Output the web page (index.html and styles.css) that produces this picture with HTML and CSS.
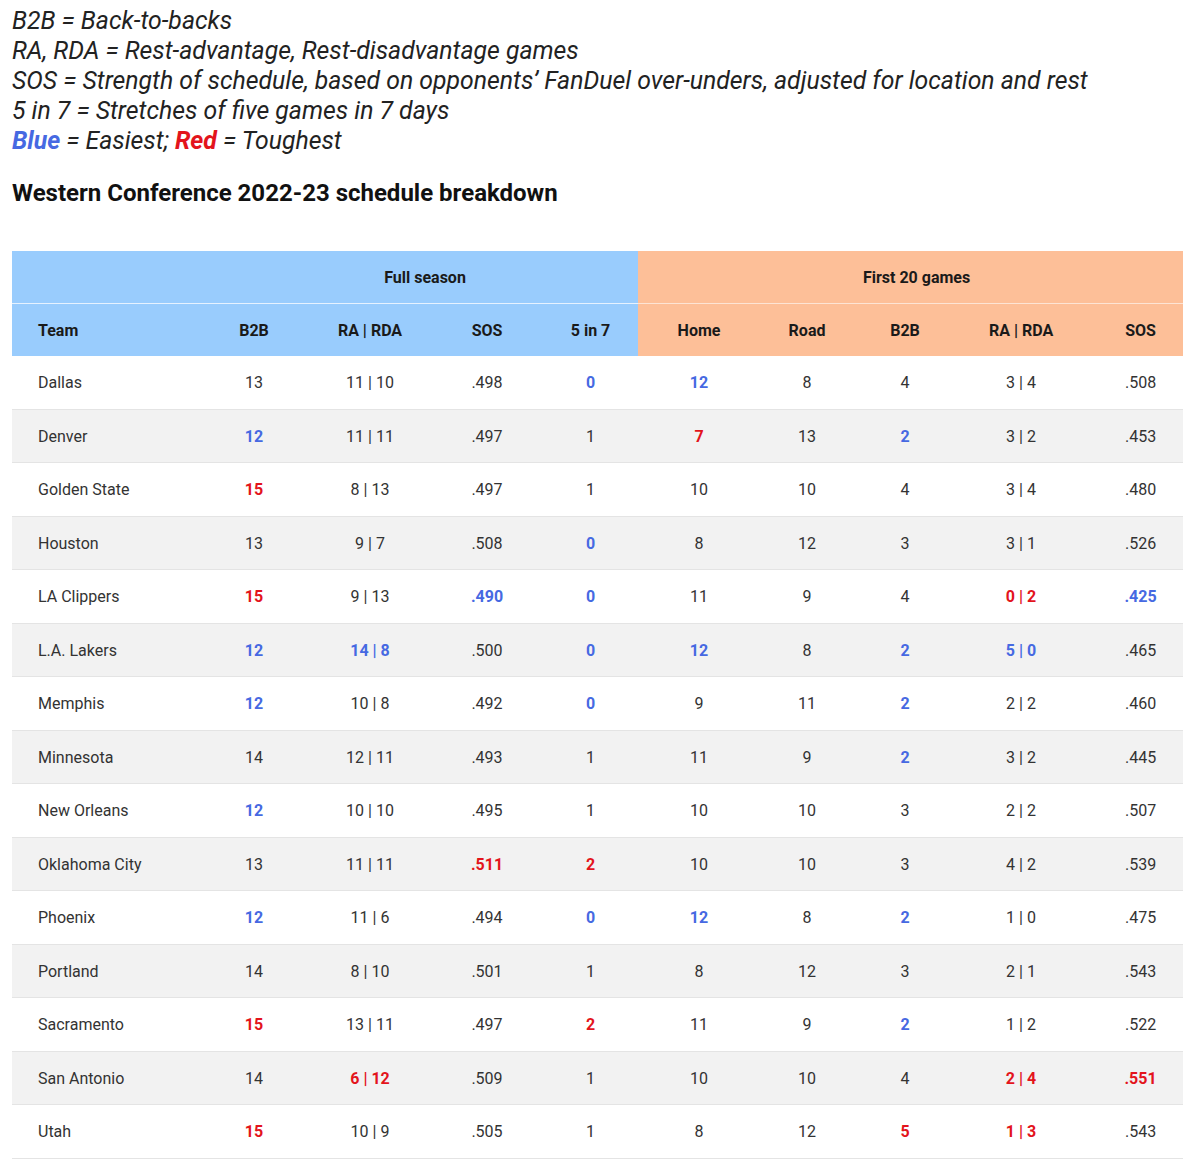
FILE: index.html
```html
<!DOCTYPE html>
<html lang="en">
<head>
<meta charset="utf-8">
<title>Western Conference 2022-23 schedule breakdown</title>
<link rel="stylesheet" href="styles.css">
</head>
<body>
<div class="legend">
  <p>B2B = Back-to-backs</p>
  <p>RA, RDA = Rest-advantage, Rest-disadvantage games</p>
  <p>SOS = Strength of schedule, based on opponents’ FanDuel over-unders, adjusted for location and rest</p>
  <p>5 in 7 = Stretches of five games in 7 days</p>
  <p><b class="blue">Blue</b> = Easiest; <b class="red">Red</b> = Toughest</p>
</div>
<h2 class="title">Western Conference 2022-23 schedule breakdown</h2>
<table class="sched">
  <colgroup>
    <col class="c-team"><col class="c-b2b"><col class="c-ra"><col class="c-sos"><col class="c-57">
    <col class="c-home"><col class="c-road"><col class="c-b2b2"><col class="c-ra2"><col class="c-sos2">
  </colgroup>
  <thead>
    <tr class="group">
      <th class="full"></th>
      <th colspan="4" class="full span">Full season</th>
      <th colspan="5" class="first span">First 20 games</th>
    </tr>
    <tr class="cols">
      <th class="full team">Team</th><th class="full">B2B</th><th class="full">RA | RDA</th><th class="full">SOS</th><th class="full five">5 in 7</th>
      <th class="first">Home</th><th class="first">Road</th><th class="first">B2B</th><th class="first">RA | RDA</th><th class="first last">SOS</th>
    </tr>
  </thead>
  <tbody>
    <tr><td class="team">Dallas</td><td>13</td><td>11 | 10</td><td>.498</td><td class="five blue">0</td><td class="blue">12</td><td>8</td><td>4</td><td>3 | 4</td><td class="last">.508</td></tr>
    <tr><td class="team">Denver</td><td class="blue">12</td><td>11 | 11</td><td>.497</td><td class="five">1</td><td class="red">7</td><td>13</td><td class="blue">2</td><td>3 | 2</td><td class="last">.453</td></tr>
    <tr><td class="team">Golden State</td><td class="red">15</td><td>8 | 13</td><td>.497</td><td class="five">1</td><td>10</td><td>10</td><td>4</td><td>3 | 4</td><td class="last">.480</td></tr>
    <tr><td class="team">Houston</td><td>13</td><td>9 | 7</td><td>.508</td><td class="five blue">0</td><td>8</td><td>12</td><td>3</td><td>3 | 1</td><td class="last">.526</td></tr>
    <tr><td class="team">LA Clippers</td><td class="red">15</td><td>9 | 13</td><td class="blue">.490</td><td class="five blue">0</td><td>11</td><td>9</td><td>4</td><td class="red">0 | 2</td><td class="last blue">.425</td></tr>
    <tr><td class="team">L.A. Lakers</td><td class="blue">12</td><td class="blue">14 | 8</td><td>.500</td><td class="five blue">0</td><td class="blue">12</td><td>8</td><td class="blue">2</td><td class="blue">5 | 0</td><td class="last">.465</td></tr>
    <tr><td class="team">Memphis</td><td class="blue">12</td><td>10 | 8</td><td>.492</td><td class="five blue">0</td><td>9</td><td>11</td><td class="blue">2</td><td>2 | 2</td><td class="last">.460</td></tr>
    <tr><td class="team">Minnesota</td><td>14</td><td>12 | 11</td><td>.493</td><td class="five">1</td><td>11</td><td>9</td><td class="blue">2</td><td>3 | 2</td><td class="last">.445</td></tr>
    <tr><td class="team">New Orleans</td><td class="blue">12</td><td>10 | 10</td><td>.495</td><td class="five">1</td><td>10</td><td>10</td><td>3</td><td>2 | 2</td><td class="last">.507</td></tr>
    <tr><td class="team">Oklahoma City</td><td>13</td><td>11 | 11</td><td class="red">.511</td><td class="five red">2</td><td>10</td><td>10</td><td>3</td><td>4 | 2</td><td class="last">.539</td></tr>
    <tr><td class="team">Phoenix</td><td class="blue">12</td><td>11 | 6</td><td>.494</td><td class="five blue">0</td><td class="blue">12</td><td>8</td><td class="blue">2</td><td>1 | 0</td><td class="last">.475</td></tr>
    <tr><td class="team">Portland</td><td>14</td><td>8 | 10</td><td>.501</td><td class="five">1</td><td>8</td><td>12</td><td>3</td><td>2 | 1</td><td class="last">.543</td></tr>
    <tr><td class="team">Sacramento</td><td class="red">15</td><td>13 | 11</td><td>.497</td><td class="five red">2</td><td>11</td><td>9</td><td class="blue">2</td><td>1 | 2</td><td class="last">.522</td></tr>
    <tr><td class="team">San Antonio</td><td>14</td><td class="red">6 | 12</td><td>.509</td><td class="five">1</td><td>10</td><td>10</td><td>4</td><td class="red">2 | 4</td><td class="last red">.551</td></tr>
    <tr><td class="team">Utah</td><td class="red">15</td><td>10 | 9</td><td>.505</td><td class="five">1</td><td>8</td><td>12</td><td class="red">5</td><td class="red">1 | 3</td><td class="last">.543</td></tr>
  </tbody>
</table>
</body>
</html>
```
FILE: styles.css
```css
html, body {
  margin: 0;
  padding: 0;
  background: #ffffff;
}
body {
  padding: 6px 12px 0 12px;
  font-family: Roboto, "Liberation Sans", Arial, sans-serif;
  color: #222222;
}
.legend p {
  margin: 0;
  font-size: 24.8px;
  line-height: 30px;
  font-style: italic;
  font-weight: 400;
  color: #222222;
  white-space: nowrap;
}
.legend b {
  font-weight: 700;
}
.blue { color: #4669e2; font-weight: 700; }
.red { color: #e3141c; font-weight: 700; }
.title {
  margin: 22px 0 0 0;
  font-size: 24px;
  line-height: 30px;
  font-weight: 700;
  color: #111111;
}
.sched {
  margin-top: 43px;
  width: 1171px;
  border-collapse: collapse;
  table-layout: fixed;
  font-size: 16px;
}
.c-team { width: 184px; }
.c-b2b { width: 116px; }
.c-ra { width: 116px; }
.c-sos { width: 118px; }
.c-57 { width: 92px; }
.c-home { width: 122px; }
.c-road { width: 94px; }
.c-b2b2 { width: 102px; }
.c-ra2 { width: 130px; }
.c-sos2 { width: 97px; }
.sched th {
  font-weight: 700;
  color: #1a1a1a;
  text-align: center;
  padding: 0;
}
.sched .group th {
  height: 52px;
  border-bottom: 1px solid #e6f2ff;
}
.sched .group th.full.span { padding-left: 16px; }
.sched .group th.first.span { padding-left: 12px; }
.sched .cols th {
  height: 52px;
}
.sched th.full { background: #99ccfd; }
.sched th.first { background: #fdbf98; }
.sched .group th.first { border-bottom-color: #fde4d4; }
.sched td {
  height: 51.5px;
  padding: 1px 0 0 0;
  text-align: center;
  color: #333333;
  border-bottom: 1px solid #e4e4e4;
}
.sched td.blue { color: #4669e2; font-weight: 700; }
.sched td.red { color: #e3141c; font-weight: 700; }
.sched .team {
  text-align: left;
  padding-left: 26px;
}
.sched .five {
  padding-right: 3px;
}
.sched .last {
  padding-left: 12px;
}
.sched tbody tr:nth-child(even) td {
  background: #f2f2f2;
}
```
